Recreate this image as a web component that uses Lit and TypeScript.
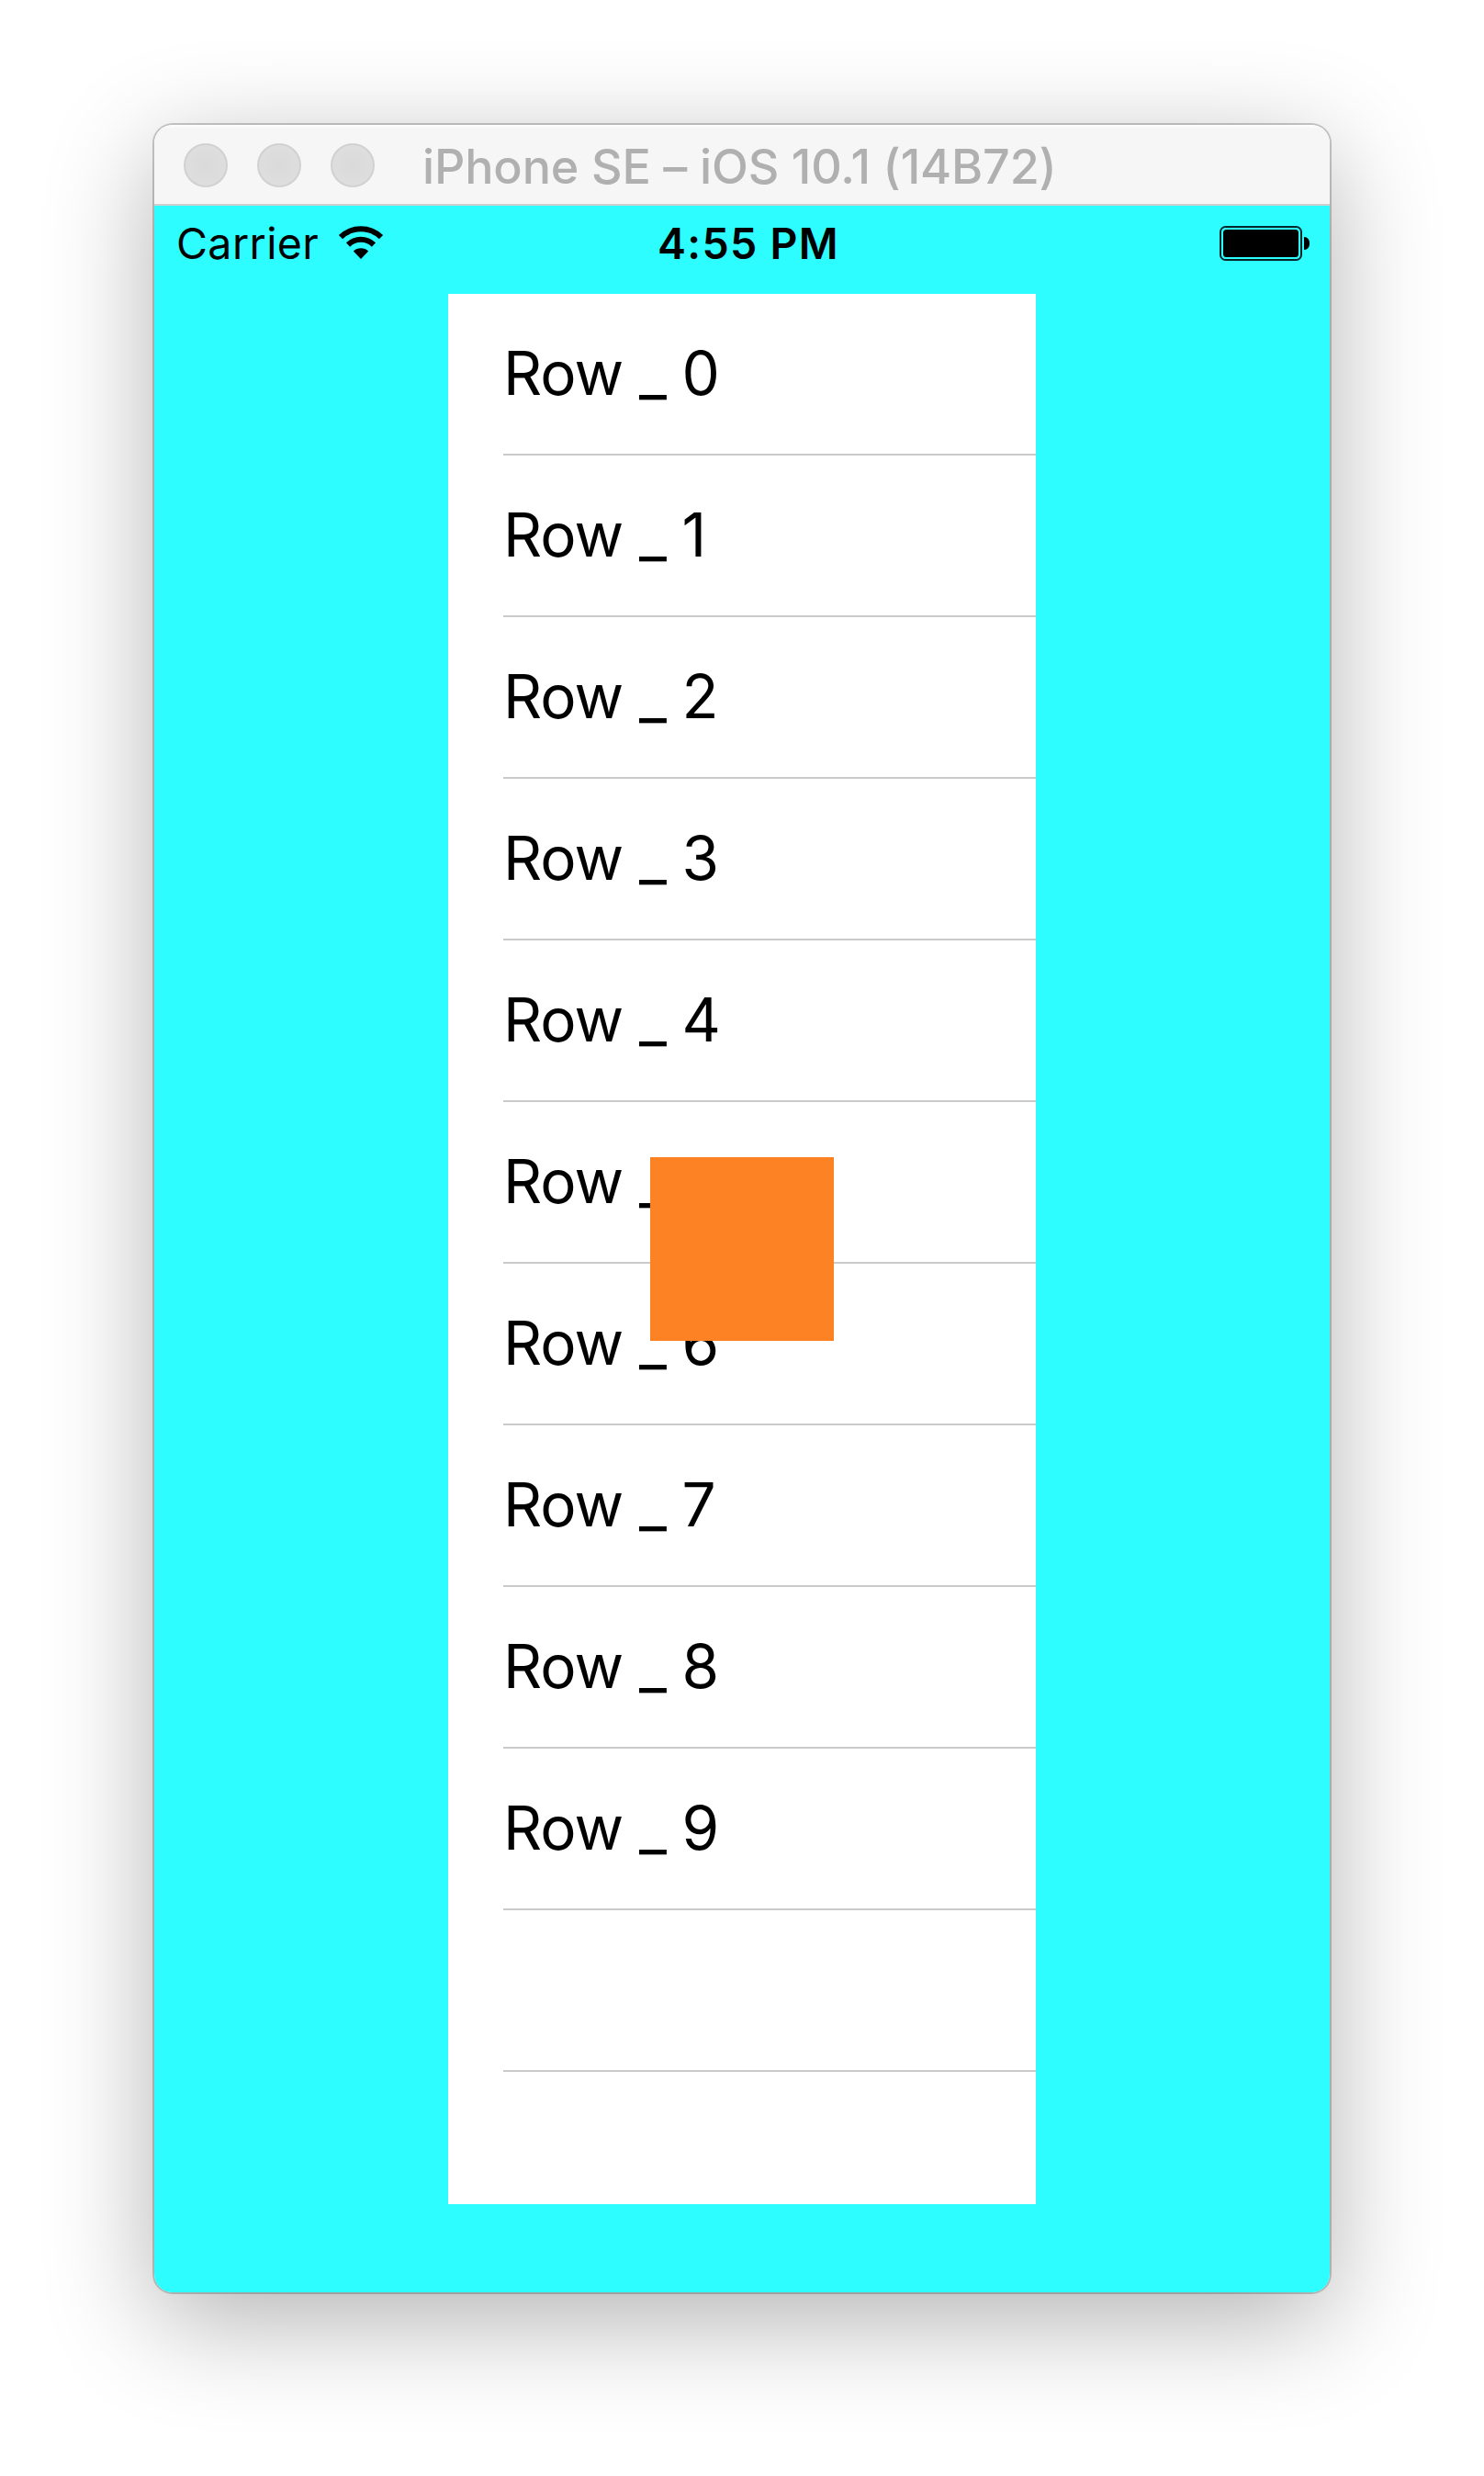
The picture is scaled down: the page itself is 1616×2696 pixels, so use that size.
import { LitElement, html, css } from "lit";
import { customElement, property } from "lit/decorators.js";

@customElement("title-bar")
class TitleBar extends LitElement {
  @property() label = "";

  static styles = css`
    :host {
      display: block;
    }
    .bar {
      box-sizing: border-box;
      height: 88px;
      padding: 20px 32px 0;
      display: flex;
      gap: 32px;
      background: linear-gradient(#ffffff 0, #f6f6f6 4px);
      border-bottom: 2px solid #cfcfcf;
    }
    .light {
      box-sizing: border-box;
      width: 48px;
      height: 48px;
      border-radius: 50%;
      border: 2px solid #d1d1d1;
      background: radial-gradient(#dadada, #dfdfdf);
    }
    .label {
      margin-left: 20px;
      line-height: 48px;
      padding-top: 2px;
      font-size: 52px;
      font-weight: 500;
      letter-spacing: -0.13px;
      color: #b0b0b0;
      white-space: nowrap;
    }
  `;

  render() {
    return html`<div class="bar">
      <span class="light"></span><span class="light"></span><span class="light"></span>
      <span class="label">${this.label}</span>
    </div>`;
  }
}

@customElement("status-bar")
class StatusBar extends LitElement {
  static styles = css`
    :host {
      display: block;
    }
    .bar {
      box-sizing: border-box;
      height: 96px;
      padding: 0 20px 0 24px;
      display: grid;
      grid-template-columns: 1fr auto 1fr;
      font-size: 46.5px;
      line-height: 82px;
      color: #000;
      white-space: nowrap;
    }
    .left {
      display: flex;
    }
    .carrier {
      width: 176px;
      letter-spacing: 0.4px;
    }
    .wifi {
      width: 50px;
      height: 36px;
      margin-top: 22px;
    }
    .time {
      font-weight: 600;
      margin-left: 10px;
      letter-spacing: 1.3px;
    }
    .battery {
      justify-self: end;
      width: 100px;
      height: 38px;
      margin-top: 22px;
    }
  `;

  render() {
    return html`<div class="bar">
      <div class="left">
        <span class="carrier">Carrier</span>
        <svg class="wifi" viewBox="0 0 50 36">
          <g fill="none" stroke="#000" stroke-width="6">
            <path d="M3 12.2A31.5 31.5 0 0 1 47 12.2" />
            <path d="M11 20.5A20 20 0 0 1 39 20.5" />
          </g>
          <path d="M25 36L16.8 27.6A12 12 0 0 1 33.2 27.6Z" />
        </svg>
      </div>
      <span class="time">4:55 PM</span>
      <svg class="battery" viewBox="0 0 100 38">
        <rect x="1" y="1" width="88" height="36" rx="5.5" fill="none" stroke="#06282b" stroke-width="2" />
        <rect x="4" y="4" width="82" height="30" rx="3.5" />
        <path d="M92 12C96 12 98 15 98 19S96 26 92 26Z" />
      </svg>
    </div>`;
  }
}

@customElement("row-table")
class RowTable extends LitElement {
  @property({ type: Array }) rows: string[] = [];

  static styles = css`
    :host {
      display: block;
    }
    .table {
      width: 640px;
      height: 2080px;
      overflow: hidden;
      background: #fff;
    }
    .cell {
      box-sizing: border-box;
      height: 176px;
      margin-left: 60px;
      border-bottom: 2px solid #cacacc;
      font-size: 65.6px;
      line-height: 172px;
      letter-spacing: -0.9px;
      color: #000;
      white-space: nowrap;
    }
  `;

  render() {
    return html`<div class="table">${this.rows.map((r) => html`<div class="cell">${r}</div>`)}</div>`;
  }
}

@customElement("app-root")
class AppRoot extends LitElement {
  private rows = [...Array.from({ length: 10 }, (_, i) => `Row _ ${i}`), "", ""];

  static styles = css`
    :host {
      display: block;
      box-sizing: border-box;
      height: 2696px;
      padding: 136px 168px 0;
      overflow: hidden;
      background: #fff;
      font-family: Inter, "Liberation Sans", sans-serif;
    }
    .window {
      width: 1280px;
      border-radius: 20px;
      box-shadow: 0 0 0 2px rgba(0, 0, 0, 0.2), 0 30px 118px rgba(0, 0, 0, 0.31);
    }
    .clip {
      border-radius: 20px;
      overflow: hidden;
    }
    .screen {
      position: relative;
      height: 2272px;
      background: #2dfdff;
    }
    .list {
      margin-left: 320px;
    }
    .square {
      position: absolute;
      left: 540px;
      top: 1036px;
      width: 200px;
      height: 200px;
      background: #fd8224;
    }
  `;

  render() {
    return html`<div class="window">
      <div class="clip">
        <title-bar label="iPhone SE – iOS 10.1 (14B72)"></title-bar>
        <div class="screen">
          <status-bar></status-bar>
          <row-table class="list" .rows=${this.rows}></row-table>
          <div class="square"></div>
        </div>
      </div>
    </div>`;
  }
}
